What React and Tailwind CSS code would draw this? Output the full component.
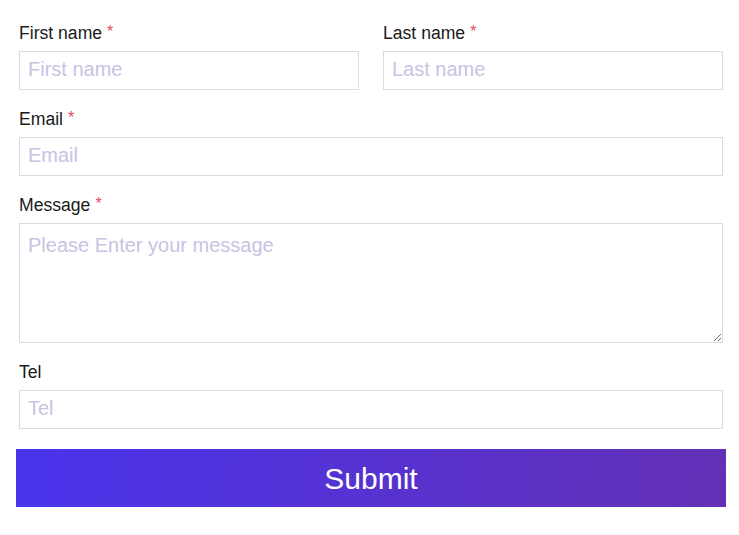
import React, { useState } from 'react';

const Label = ({ children, required }) => (
  <label className="block h-[26px] leading-[26px] text-[17.6px] text-[#1a1a1a] mb-[5px]">
    {children}
    {required && <span className="relative -top-[2px] ml-[5px] text-[16px] text-[#e6495a]">*</span>}
  </label>
);

const inputClass =
  'block w-full h-[39px] px-[8px] pb-[3px] border border-[#dcdae6] bg-white text-[20px] text-[#333] placeholder:text-[#c7c3e3] outline-none';

const App = () => {
  const [formData, setFormData] = useState({
    firstName: '',
    lastName: '',
    email: '',
    message: '',
    tel: ''
  });

  const handleInputChange = (e) => {
    const { name, value } = e.target;
    setFormData(prev => ({ ...prev, [name]: value }));
  };

  return (
    <div className="min-h-screen bg-white pl-[19px] pr-[16px] pt-[20px] font-['Liberation_Sans',Arial,sans-serif]">
      <form className="flex flex-col gap-[16px]" onSubmit={(e) => e.preventDefault()}>
        <div className="grid grid-cols-2 gap-[24px]">
          <div>
            <Label required>First name</Label>
            <input
              name="firstName"
              value={formData.firstName}
              onChange={handleInputChange}
              placeholder="First name"
              className={inputClass}
            />
          </div>
          <div>
            <Label required>Last name</Label>
            <input
              name="lastName"
              value={formData.lastName}
              onChange={handleInputChange}
              placeholder="Last name"
              className={inputClass}
            />
          </div>
        </div>

        <div>
          <Label required>Email</Label>
          <input
            type="email"
            name="email"
            value={formData.email}
            onChange={handleInputChange}
            placeholder="Email"
            className={inputClass}
          />
        </div>

        <div>
          <Label required>Message</Label>
          <textarea
            name="message"
            value={formData.message}
            onChange={handleInputChange}
            placeholder="Please Enter your message"
            className="block w-full h-[120px] px-[8px] pt-[6px] border border-[#dcdae6] bg-white text-[20px] text-[#333] placeholder:text-[#c7c3e3] outline-none"
          />
        </div>

        <div>
          <Label>Tel</Label>
          <input
            type="tel"
            name="tel"
            value={formData.tel}
            onChange={handleInputChange}
            placeholder="Tel"
            className={inputClass}
          />
        </div>

        <button
          type="submit"
          className="mt-[4px] -mx-[3px] h-[58px] bg-[linear-gradient(100deg,#4934ec,#6330b5)] text-white text-[30px]"
        >
          Submit
        </button>
      </form>
    </div>
  );
};

export default App;
